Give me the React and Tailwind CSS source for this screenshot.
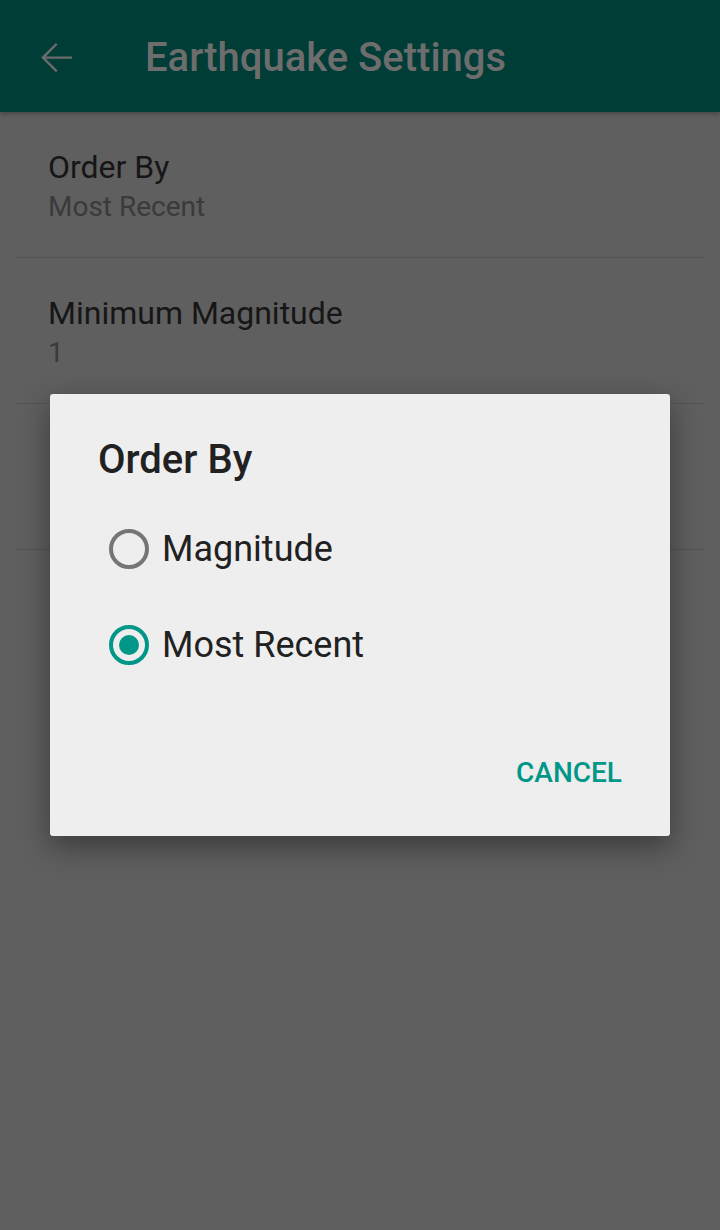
const font = { fontFamily: 'Roboto, "Noto Sans", sans-serif' }

function Radio({ checked }) {
  return (
    <svg width="44" height="44" viewBox="0 0 44 44">
      <circle
        cx="22"
        cy="22"
        r="18"
        fill="none"
        stroke={checked ? '#009688' : '#757575'}
        strokeWidth="4"
      />
      {checked && <circle cx="22" cy="22" r="10" fill="#009688" />}
    </svg>
  )
}

function PrefRow({ title, value }) {
  return (
    <div className="mx-4 border-b border-[#545454] h-[146px] px-8 pt-[35px]">
      <div className="text-[32px] leading-[40px] text-[#161616]">{title}</div>
      <div className="text-[28px] leading-[36px] text-[#3a3a3a] mt-[2px]">{value}</div>
    </div>
  )
}

export default function App() {
  return (
    <div className="relative w-[720px] h-[1230px] bg-[#5f5f5f] overflow-hidden" style={font}>
      <header className="h-[112px] bg-[#003d37] flex items-center pl-[32px] pt-[3px] shadow-[0_2px_4px_rgba(0,0,0,0.25)]">
        <svg width="48" height="48" viewBox="0 0 24 24" fill="#6b6b6b">
          <path d="M20 11.2H6.9l5.9-5.9-0.85-0.85L4.6 11.8l7.35 7.35 0.85-0.85-5.9-5.9H20z" />
        </svg>
        <h1 className="ml-[65px] text-[40px] font-medium text-[#6d6d6d]">Earthquake Settings</h1>
      </header>

      <div>
        <PrefRow title="Order By" value="Most Recent" />
        <PrefRow title="Minimum Magnitude" value="1" />
        <PrefRow title="" value="" />
      </div>

      {/* dialog */}
      <div className="absolute left-[50px] top-[394px] w-[620px] h-[442px] bg-[#eeeeee] rounded-[3px] shadow-[0_10px_30px_rgba(0,0,0,0.4)]">
        <div className="pl-[48px] pt-[42px] text-[40px] leading-[48px] font-medium text-[#212121]">Order By</div>
        <div className="mt-[43px] pl-[57px] flex flex-col gap-[52px]">
          <div className="flex items-center gap-[11px] h-[44px]">
            <Radio />
            <span className="text-[36px] text-[#212121]">Magnitude</span>
          </div>
          <div className="flex items-center gap-[11px] h-[44px]">
            <Radio checked />
            <span className="text-[36px] text-[#212121]">Most Recent</span>
          </div>
        </div>
        <div className="absolute right-[48px] top-[363px] text-[28px] leading-[32px] font-medium text-[#009688]">CANCEL</div>
      </div>
    </div>
  )
}
